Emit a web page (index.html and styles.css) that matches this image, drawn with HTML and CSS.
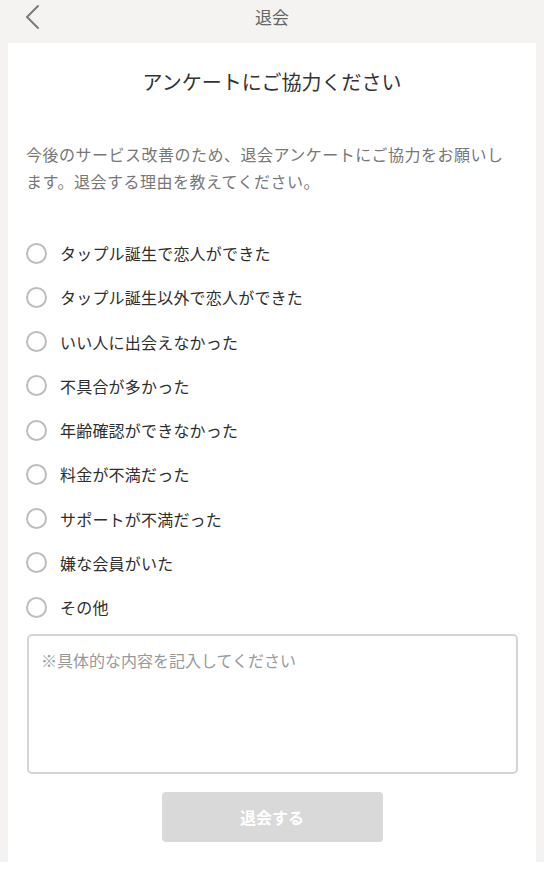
FILE: index.html
```html
<!DOCTYPE html>
<html lang="ja">
<head>
<meta charset="utf-8">
<title>退会</title>
<link rel="stylesheet" href="styles.css">
</head>
<body>
<div class="page">
  <header class="topbar">
    <svg class="back" width="16" height="26" viewBox="0 0 16 26"><path d="M13 2 L2 13 L13 24" fill="none" stroke="#7a7a7a" stroke-width="2" stroke-linecap="round" stroke-linejoin="round"/></svg>
    <h1 class="topbar-title">退会</h1>
  </header>
  <main class="card">
    <h2 class="card-title">アンケートにご協力ください</h2>
    <p class="desc">今後のサービス改善のため、退会アンケートにご協力をお願いします。退会する理由を教えてください。</p>
    <ul class="options">
      <li class="option"><span class="radio"></span><span class="label">タップル誕生で恋人ができた</span></li>
      <li class="option"><span class="radio"></span><span class="label">タップル誕生以外で恋人ができた</span></li>
      <li class="option"><span class="radio"></span><span class="label">いい人に出会えなかった</span></li>
      <li class="option"><span class="radio"></span><span class="label">不具合が多かった</span></li>
      <li class="option"><span class="radio"></span><span class="label">年齢確認ができなかった</span></li>
      <li class="option"><span class="radio"></span><span class="label">料金が不満だった</span></li>
      <li class="option"><span class="radio"></span><span class="label">サポートが不満だった</span></li>
      <li class="option"><span class="radio"></span><span class="label">嫌な会員がいた</span></li>
      <li class="option"><span class="radio"></span><span class="label">その他</span></li>
    </ul>
    <textarea class="memo" placeholder="※具体的な内容を記入してください"></textarea>
    <div class="actions">
      <button class="submit" type="button">退会する</button>
    </div>
  </main>
</div>
</body>
</html>
```

FILE: styles.css
```css
html {
  background: #ffffff;
}
body {
  margin: 0;
  font-family: "Noto Sans CJK JP", "Noto Sans", sans-serif;
  color: #444;
}
.page {
  background: #f4f3f1;
  padding: 0 8px;
}
.topbar {
  position: relative;
  height: 33px;
  padding-bottom: 10px;
  display: flex;
  align-items: center;
  justify-content: center;
}
.back {
  position: absolute;
  left: 17px;
  top: 4px;
}
.topbar-title {
  margin: 0;
  font-size: 17px;
  font-weight: normal;
  color: #666;
  line-height: 24px;
}
.card {
  background: #ffffff;
  padding: 25px 18px 20px;
  display: flex;
  flex-direction: column;
}
.card-title {
  margin: 0;
  text-align: center;
  font-size: 20px;
  font-weight: normal;
  line-height: 28px;
  color: #333;
}
.desc {
  margin: 45px 0 0;
  font-size: 16px;
  line-height: 27px;
  letter-spacing: 0.5px;
  color: #777;
}
.options {
  list-style: none;
  margin: 36px 0 0;
  padding: 0;
}
.option {
  display: flex;
  align-items: center;
  height: 44.25px;
}
.radio {
  box-sizing: border-box;
  width: 21px;
  height: 21px;
  border: 2px solid #bdbdbd;
  border-radius: 50%;
  margin-right: 13px;
  flex: none;
}
.label {
  font-size: 16px;
  letter-spacing: 0.2px;
  color: #2e2e2e;
}
.memo {
  box-sizing: border-box;
  margin: 5px 0 0 1px;
  width: 491px;
  height: 140px;
  border: 2px solid #d4d4d4;
  border-radius: 5px;
  padding: 12px 12px;
  font-family: "Noto Sans CJK JP", "Noto Sans", sans-serif;
  font-size: 16px;
  line-height: 24px;
  resize: none;
  outline: none;
}
.memo::placeholder {
  color: #999;
}
.actions {
  display: flex;
  justify-content: center;
  margin-top: 18px;
}
.submit {
  width: 221px;
  height: 50px;
  border: none;
  border-radius: 4px;
  background: #d9d9d9;
  color: #ffffff;
  font-family: "Noto Sans CJK JP", "Noto Sans", sans-serif;
  font-size: 16px;
  font-weight: bold;
}
```
